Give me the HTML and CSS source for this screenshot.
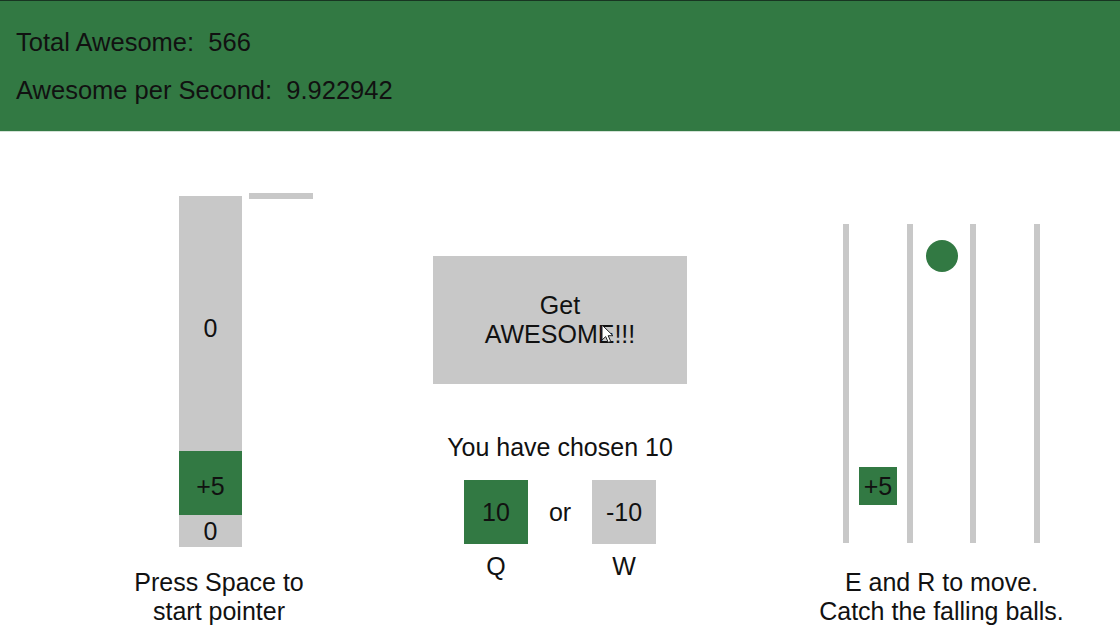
FILE: index.html
```html
<!DOCTYPE html>
<html>
<head>
<meta charset="utf-8">
<link rel="stylesheet" href="styles.css">
</head>
<body>
<header class="stats">
  <p class="stat">Total Awesome:&nbsp; 566</p>
  <p class="stat">Awesome per Second:&nbsp; 9.922942</p>
</header>
<main class="games">
  <section class="col col-meter">
    <div class="meter">
      <div class="bar">
        <div class="seg seg-top">0</div>
        <div class="seg seg-hit">+5</div>
        <div class="seg seg-bottom">0</div>
      </div>
      <div class="pointer"></div>
    </div>
    <p class="caption">Press Space to<br>start pointer</p>
  </section>
  <section class="col col-center">
    <div class="get-btn">
      <span>Get<br>AWESOME!!!</span>
      <svg class="cursor" width="15" height="20" viewBox="0 0 15 20"><path d="M1 1 L1 16 L4.7 12.6 L7.3 18.5 L9.7 17.4 L7.2 11.7 L12 11.7 Z" fill="#fff" stroke="#222" stroke-width="1" stroke-linejoin="round"/></svg>
    </div>
    <p class="chosen">You have chosen 10</p>
    <div class="choices">
      <div class="choice on">10</div>
      <div class="or">or</div>
      <div class="choice">-10</div>
      <div class="key">Q</div>
      <div></div>
      <div class="key">W</div>
    </div>
  </section>
  <section class="col col-catch">
    <div class="lanes">
      <div class="lane"></div>
      <div class="lane"></div>
      <div class="lane"></div>
      <div class="lane"></div>
      <div class="ball"></div>
      <div class="catcher">+5</div>
    </div>
    <p class="caption">E and R to move.<br>Catch the falling balls.</p>
  </section>
</main>
</body>
</html>
```
FILE: styles.css
```css
html, body {
  margin: 0;
  padding: 0;
  background: #fff;
}
body {
  font-family: "Liberation Sans", Arial, sans-serif;
  color: #111;
  width: 1120px;
  height: 632px;
  overflow: hidden;
}
.stats {
  background: #327943;
  border-top: 1px solid #183522;
  border-bottom: 1px solid #d3e2d6;
  height: 132px;
  box-sizing: border-box;
  padding: 28px 16px 0;
}
.stat {
  margin: 0 0 22px;
  font-size: 25.5px;
  line-height: 26px;
}
.games {
  display: flex;
  align-items: flex-start;
  font-size: 25px;
  line-height: 29px;
}
.col {
  display: flex;
  flex-direction: column;
}
.col-meter {
  width: 240px;
  margin-left: 99px;
  padding-top: 61px;
}
.meter {
  display: flex;
  align-items: flex-start;
  margin-left: 80px;
}
.bar {
  width: 63px;
  display: flex;
  flex-direction: column;
  margin-top: 3px;
}
.seg {
  display: flex;
  align-items: center;
  justify-content: center;
  background: #c8c8c8;
  box-sizing: border-box;
}
.seg-top { height: 255px; padding-top: 9px; }
.seg-hit { height: 64px; background: #327943; padding-top: 7px; }
.seg-bottom { height: 32px; }
.pointer {
  width: 64px;
  height: 6px;
  background: #c8c8c8;
  margin-left: 7px;
}
.caption {
  margin: 21px 0 0;
  text-align: center;
}
.col-center {
  width: 320px;
  margin-left: 61px;
  padding-top: 124px;
  align-items: center;
}
.get-btn {
  position: relative;
  width: 254px;
  height: 128px;
  background: #c8c8c8;
  display: flex;
  align-items: center;
  justify-content: center;
  text-align: center;
}
.cursor {
  position: absolute;
  left: 168px;
  top: 68px;
}
.chosen {
  margin: 49px 0 0;
  text-align: center;
}
.choices {
  margin-top: 18px;
  display: grid;
  grid-template-columns: 64px 64px 64px;
  grid-template-rows: 64px 29px;
  row-gap: 8px;
  text-align: center;
}
.choice {
  display: flex;
  align-items: center;
  justify-content: center;
  background: #c8c8c8;
}
.choice.on { background: #327943; }
.or {
  display: flex;
  align-items: center;
  justify-content: center;
}
.col-catch {
  width: 241px;
  margin-left: 101px;
  padding-top: 92px;
  align-items: center;
}
.lanes {
  position: relative;
  width: 197px;
  height: 319px;
  display: flex;
  justify-content: space-between;
}
.lane {
  width: 6px;
  background: #c8c8c8;
}
.ball {
  position: absolute;
  left: 83px;
  top: 16px;
  width: 32px;
  height: 32px;
  border-radius: 50%;
  background: #327943;
}
.catcher {
  position: absolute;
  left: 16px;
  top: 243px;
  width: 38px;
  height: 38px;
  background: #327943;
  display: flex;
  align-items: center;
  justify-content: center;
}
.col-catch .caption {
  margin-top: 25px;
  white-space: nowrap;
}
```
